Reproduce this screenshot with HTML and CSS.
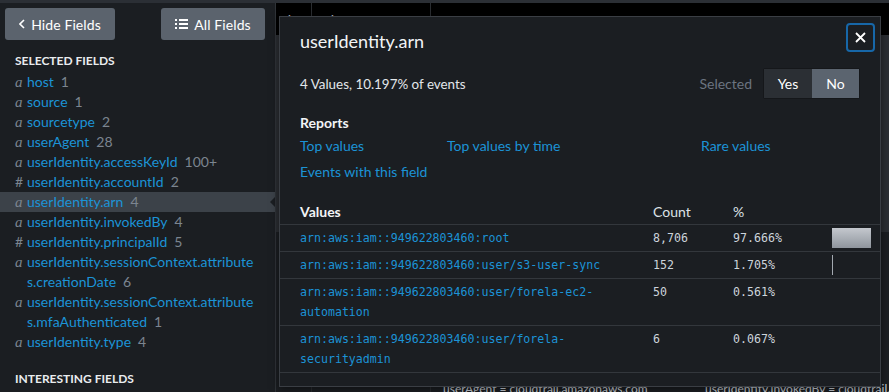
FILE: index.html
```html
<!DOCTYPE html>
<html lang="en">
<head>
    <meta charset="UTF-8">
    <meta name="viewport" content="width=device-width, initial-scale=1.0">
    <title>Search - Fields</title>
    <link rel="stylesheet" href="styles.css">
</head>
<body>
    <div class="topline"></div>
    <div class="app">
        <aside class="sidebar">
            <div class="sidebar-actions">
                <button class="btn hide-btn">
                    <svg width="6" height="10" viewBox="0 0 6 10"><polyline points="5,1 1,5 5,9" fill="none" stroke="#fff" stroke-width="1.6"/></svg>
                    Hide Fields
                </button>
                <button class="btn all-btn">
                    <svg width="13" height="10" viewBox="0 0 13 10" fill="#fff">
                        <rect x="0" y="0" width="2" height="2"/><rect x="4" y="0" width="9" height="2"/>
                        <rect x="0" y="4" width="2" height="2"/><rect x="4" y="4" width="9" height="2"/>
                        <rect x="0" y="8" width="2" height="2"/><rect x="4" y="8" width="9" height="2"/>
                    </svg>
                    All Fields
                </button>
            </div>

            <div class="section-title">Selected Fields</div>
            <ul class="field-list">
                <li class="field"><span class="type">a</span><span class="name">host<span class="count">1</span></span></li>
                <li class="field"><span class="type">a</span><span class="name">source<span class="count">1</span></span></li>
                <li class="field"><span class="type">a</span><span class="name">sourcetype<span class="count">2</span></span></li>
                <li class="field"><span class="type">a</span><span class="name">userAgent<span class="count">28</span></span></li>
                <li class="field"><span class="type">a</span><span class="name">userIdentity.accessKeyId<span class="count">100+</span></span></li>
                <li class="field"><span class="type num">#</span><span class="name">userIdentity.accountId<span class="count">2</span></span></li>
                <li class="field active"><span class="type">a</span><span class="name">userIdentity.arn<span class="count">4</span></span></li>
                <li class="field"><span class="type">a</span><span class="name">userIdentity.invokedBy<span class="count">4</span></span></li>
                <li class="field"><span class="type num">#</span><span class="name">userIdentity.principalId<span class="count">5</span></span></li>
                <li class="field"><span class="type">a</span><span class="name">userIdentity.sessionContext.attributes.creationDate<span class="count">6</span></span></li>
                <li class="field"><span class="type">a</span><span class="name">userIdentity.sessionContext.attributes.mfaAuthenticated<span class="count">1</span></span></li>
                <li class="field"><span class="type">a</span><span class="name">userIdentity.type<span class="count">4</span></span></li>
            </ul>
            <div class="section-title interesting">Interesting Fields</div>
        </aside>

        <main class="events">
            <div class="events-head">
                <div class="col-info">i</div>
                <div class="col-time">Time</div>
                <div class="col-event">Event</div>
            </div>
            <div class="event-row expanded">
                <div class="col-info"></div>
                <div class="col-time"></div>
                <div class="col-event">
                    <div class="kv-line first"><span>eventSource = s3.amazonaws.com</span><span>userIdentity.sessionContext =</span></div>
                    <div class="kv-line"><span>sourcetype = aws:cloudtrail</span><span>userIdentity.type = AssumedRole</span></div>
                </div>
            </div>
            <div class="event-row">
                <div class="col-info"></div>
                <div class="col-time"></div>
                <div class="col-event">
                    <div class="kv-line eq"><span>host = forela</span><span>source = cloudtrail:eventSource =</span></div>
                    <div class="kv-line last"><span>userAgent = cloudtrail.amazonaws.com</span><span>userIdentity.invokedBy = cloudtrail.amazonaws.com</span></div>
                </div>
            </div>
        </main>

        <div class="popover">
            <div class="popover-head">
                <h2 class="popover-title">userIdentity.arn</h2>
                <button class="close-btn">
                    <svg width="11" height="11" viewBox="0 0 11 11"><path d="M1 1 L10 10 M10 1 L1 10" stroke="#fff" stroke-width="1.8" fill="none"/></svg>
                </button>
            </div>

            <div class="popover-meta">
                <span class="summary">4 Values, 10.197% of events</span>
                <div class="selected">
                    <span class="selected-label">Selected</span>
                    <div class="toggle">
                        <button class="toggle-btn">Yes</button>
                        <button class="toggle-btn on">No</button>
                    </div>
                </div>
            </div>

            <div class="reports">
                <div class="reports-title">Reports</div>
                <div class="reports-links">
                    <a href="#">Top values</a>
                    <a href="#">Top values by time</a>
                    <a href="#">Rare values</a>
                    <a href="#">Events with this field</a>
                </div>
            </div>

            <table class="values">
                <thead>
                    <tr>
                        <th class="c-value">Values</th>
                        <th class="c-count">Count</th>
                        <th class="c-pct">%</th>
                        <th class="c-bar"></th>
                    </tr>
                </thead>
                <tbody>
                    <tr>
                        <td class="c-value"><a href="#">arn:aws:iam::949622803460:root</a></td>
                        <td class="c-count">8,706</td>
                        <td class="c-pct">97.666%</td>
                        <td class="c-bar"><div class="bar" style="width: 39px"></div></td>
                    </tr>
                    <tr>
                        <td class="c-value"><a href="#">arn:aws:iam::949622803460:user/s3-user-sync</a></td>
                        <td class="c-count">152</td>
                        <td class="c-pct">1.705%</td>
                        <td class="c-bar"><div class="bar thin" style="width: 1px"></div></td>
                    </tr>
                    <tr>
                        <td class="c-value"><a href="#">arn:aws:iam::949622803460:user/forela-ec2-automation</a></td>
                        <td class="c-count">50</td>
                        <td class="c-pct">0.561%</td>
                        <td class="c-bar"><div class="bar" style="width: 0px"></div></td>
                    </tr>
                    <tr>
                        <td class="c-value"><a href="#">arn:aws:iam::949622803460:user/forela-securityadmin</a></td>
                        <td class="c-count">6</td>
                        <td class="c-pct">0.067%</td>
                        <td class="c-bar"><div class="bar" style="width: 0px"></div></td>
                    </tr>
                </tbody>
            </table>
        </div>
    </div>
</body>
</html>
```

FILE: styles.css
```css
* {
    box-sizing: border-box;
}

body {
    margin: 0;
    height: 392px;
    overflow: hidden;
    background-color: #1b1e22;
    color: #d9dee3;
    font-family: Lato, "Open Sans", sans-serif;
    font-size: 14px;
}

a {
    color: #1c93d6;
    text-decoration: none;
}

.topline {
    height: 3px;
    background-color: #2b2f35;
}

.app {
    position: relative;
    display: flex;
    height: 389px;
}

/* left field sidebar */

.sidebar {
    width: 276px;
    flex-shrink: 0;
    background-color: #1b1e22;
    border-right: 1px solid #2f3338;
}

.sidebar-actions {
    display: flex;
    justify-content: space-between;
    padding: 5px 10px 0 5px;
}

.btn {
    display: flex;
    align-items: center;
    justify-content: center;
    gap: 6px;
    height: 32px;
    border: none;
    border-radius: 3px;
    background-color: #5b636d;
    color: #fff;
    font-family: Lato, sans-serif;
    font-size: 14px;
    letter-spacing: 0.1px;
    cursor: pointer;
}

.hide-btn {
    width: 110px;
}

.all-btn {
    width: 104px;
}

.section-title {
    margin: 14px 0 0 15px;
    font-size: 12px;
    font-weight: bold;
    line-height: 14px;
    text-transform: uppercase;
    color: #e9ecef;
}

.section-title.interesting {
    margin-top: 20px;
}

.field-list {
    list-style: none;
    margin: 4px 0 0;
    padding: 0;
}

.field {
    position: relative;
    display: flex;
    padding: 0 19px 0 15px;
    line-height: 20px;
}

.field.active {
    background-color: #3c4249;
}

.field.active::after {
    content: "";
    position: absolute;
    right: 0;
    top: 5px;
    border-top: 5px solid transparent;
    border-bottom: 5px solid transparent;
    border-right: 5px solid #1b1e22;
}

.type {
    width: 12px;
    flex-shrink: 0;
    font-family: "Liberation Serif", serif;
    font-style: italic;
    font-size: 15px;
    color: #7c8590;
}

.type.num {
    font-family: Lato, sans-serif;
    font-style: normal;
    font-size: 14px;
}

.name {
    color: #1c93d6;
    word-break: break-all;
}

.count {
    margin-left: 7px;
    color: #7c8590;
}

/* events behind the popover */

.events {
    flex: 1;
    overflow: hidden;
    font-size: 12px;
    color: #c9cfd6;
}

.events-head {
    display: flex;
    height: 32px;
    align-items: center;
    background-color: #000;
}

.events-head > div {
    height: 100%;
    display: flex;
    align-items: center;
    border-right: 1px solid #2a2d31;
    padding-left: 12px;
}

.col-info {
    width: 36px;
    flex-shrink: 0;
    border-right: 1px solid #2a2d31;
}

.col-time {
    width: 119px;
    flex-shrink: 0;
    border-right: 1px solid #2a2d31;
}

.col-event {
    flex: 1;
    padding-left: 12px;
    white-space: nowrap;
}

.events-head .col-event {
    border-right: none;
}

.event-row {
    display: flex;
}

.event-row.expanded {
    height: 197px;
    background-color: #2b2e33;
}

.kv-line {
    display: flex;
    line-height: 18px;
}

.kv-line span:first-child {
    width: 262px;
    flex-shrink: 0;
}

.kv-line.first {
    margin-top: 130px;
}

.kv-line.eq {
    margin-top: 126px;
}

.kv-line.last {
    margin-top: 4px;
}

/* field summary popover */

.popover {
    position: absolute;
    left: 279px;
    top: 13px;
    width: 602px;
    height: 371px;
    background-color: #1b1e22;
    border: 1px solid #3a3e44;
    box-shadow: 0 2px 8px rgba(0, 0, 0, 0.5);
}

.popover-head {
    display: flex;
    justify-content: space-between;
    align-items: flex-start;
    padding: 6px 5px 0 20px;
}

.popover-title {
    margin: 6px 0 0;
    font-size: 18px;
    font-weight: normal;
    line-height: 24px;
    color: #f2f4f6;
}

.close-btn {
    display: flex;
    align-items: center;
    justify-content: center;
    width: 29px;
    height: 29px;
    padding: 0;
    background-color: #1b1e22;
    border: 2px solid #1767a8;
    border-radius: 4px;
    cursor: pointer;
}

.popover-meta {
    display: flex;
    justify-content: space-between;
    align-items: center;
    margin-top: 15px;
    padding: 0 20px;
}

.summary {
    font-size: 13.4px;
    color: #e3e7eb;
}

.selected {
    display: flex;
    align-items: center;
    gap: 11px;
}

.selected-label {
    color: #6b7480;
}

.toggle {
    display: flex;
    border: 1px solid #15171a;
    border-radius: 2px;
}

.toggle-btn {
    height: 29px;
    width: 48px;
    border: none;
    background-color: #2b2f34;
    color: #fff;
    font-family: Lato, sans-serif;
    font-size: 14px;
    cursor: pointer;
}

.toggle-btn.on {
    width: 47px;
    background-color: #5b646f;
}

.reports {
    margin-top: 15px;
    padding: 0 20px;
}

.reports-title {
    font-weight: bold;
    line-height: 18px;
    color: #f2f4f6;
}

.reports-links {
    display: grid;
    grid-template-columns: 147px 254px auto;
    row-gap: 6px;
    margin-top: 4px;
    line-height: 20px;
}

.values {
    width: 100%;
    margin-top: 16px;
    border-collapse: collapse;
    table-layout: fixed;
}

.values th {
    padding: 4px 0 2px;
    line-height: 20px;
    text-align: left;
    font-weight: normal;
    color: #dde2e7;
}

.values th.c-value {
    font-weight: bold;
    color: #f2f4f6;
}

.values td {
    padding: 3px 0;
    line-height: 20px;
    vertical-align: top;
    border-top: 1px solid #33373c;
    border-bottom: 1px solid #33373c;
    font-family: "DejaVu Sans Mono", "Liberation Mono", monospace;
    font-size: 11.6px;
    color: #cdd4db;
}

.c-value {
    width: 373px;
    padding-left: 20px !important;
    padding-right: 10px !important;
}

.c-count {
    width: 80px;
}

.c-pct {
    width: 99px;
}

.bar {
    height: 20px;
    background: linear-gradient(#c4c8ce, #8f959d);
}

.bar.thin {
    background: #a3a9b0;
}
```
